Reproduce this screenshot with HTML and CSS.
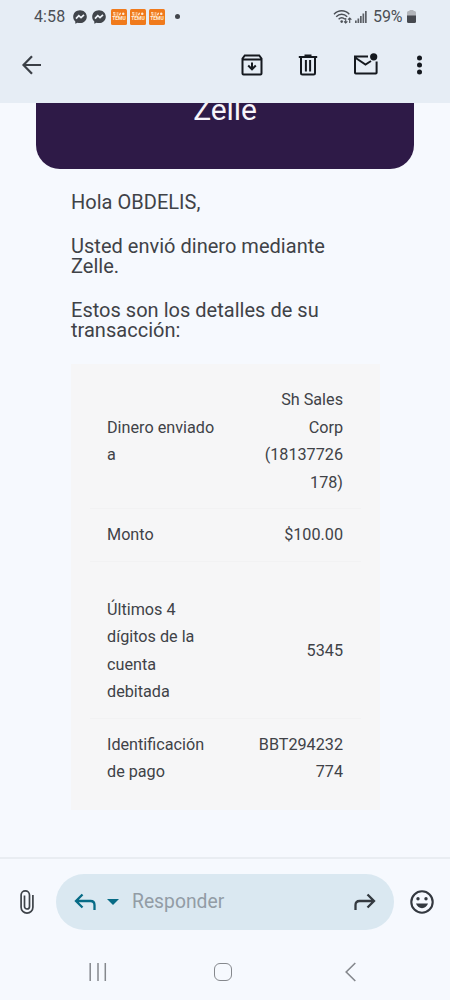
FILE: index.html
```html
<!DOCTYPE html>
<html lang="es">
<head>
<meta charset="utf-8">
<title>Correo</title>
<link rel="stylesheet" href="styles.css">
</head>
<body>
<div class="screen">
  <header class="top">
    <div class="status">
      <span class="clock">4:58</span>
      <svg class="chat" viewBox="0 0 14 14"><path d="M7 .2C3.100 .2.200 3 .200 6.700c0 2 .8 3.600 2.100 4.800v2.300l2.200-1.100c.8.200 1.600.4 2.500.4 3.900 0 6.800-2.800 6.800-6.400S10.900.2 7 .2z" fill="#41454b"/><path d="M3 8.700l2.800-3 2.200 1.900L11 4.900" fill="none" stroke="#eef3f9" stroke-width="1.700"/></svg>
      <svg class="chat" viewBox="0 0 14 14"><path d="M7 .2C3.100 .2.200 3 .200 6.700c0 2 .8 3.600 2.100 4.800v2.300l2.200-1.100c.8.200 1.600.4 2.500.4 3.900 0 6.800-2.800 6.800-6.400S10.900.2 7 .2z" fill="#41454b"/><path d="M3 8.700l2.800-3 2.200 1.900L11 4.900" fill="none" stroke="#eef3f9" stroke-width="1.700"/></svg>
      <div class="temu"><svg viewBox="0 0 12 4"><path d="M0 .8h2.400M.5 2.800h2M3.500 1h2M3.500 3h2M6.500 3.200L7.500.8M9 1.800h2.500M10.200.5v2.500"/></svg><span>TEMU</span></div>
      <div class="temu"><svg viewBox="0 0 12 4"><path d="M0 .8h2.400M.5 2.800h2M3.500 1h2M3.500 3h2M6.500 3.200L7.500.8M9 1.800h2.500M10.200.5v2.500"/></svg><span>TEMU</span></div>
      <div class="temu"><svg viewBox="0 0 12 4"><path d="M0 .8h2.400M.5 2.800h2M3.500 1h2M3.500 3h2M6.500 3.200L7.500.8M9 1.800h2.500M10.200.5v2.500"/></svg><span>TEMU</span></div>
      <i class="dot"></i>
      <svg class="wifi" viewBox="0 0 20 16"><g fill="none" stroke="#4b4f55" stroke-width="1.400"><path d="M1 5.200C5.500.5 12 .5 16.300 5.200M3.200 7.700c3.200-3.300 7.800-3.300 11 0M5.600 10.200c1.900-1.900 4.400-1.900 6.300 0"/><path d="M12.700 9v5M11 12.300l1.700 1.700 1.700-1.700M16.700 14V9M15 10.700L16.700 9l1.700 1.700" stroke-width="1.100"/></g><circle cx="8.700" cy="12.600" r="1.300" fill="#4b4f55"/></svg>
      <svg class="signal" viewBox="0 0 12 12"><path d="M0 9.500h1.700V12H0zM2.500 7.500h1.700V12H2.500zM5 5h1.700v7H5zM7.500 2.500h1.700V12H7.500zM10 0h1.700v12H10z" fill="#5b5f65"/></svg>
      <span class="percent">59%</span>
      <svg class="battery" viewBox="0 0 9 13"><path d="M2.500 0h4v1h1q1.500 0 1.500 1.500V6H0V2.500Q0 1 1.500 1h1z" fill="#b2b5ba"/><path d="M0 5.500h9v6Q9 13 7.500 13h-6Q0 13 0 11.500z" fill="#46494f"/></svg>
    </div>
    <div class="actions">
      <svg class="back" viewBox="0 0 20 20" fill="none" stroke="#3b4047" stroke-width="2.200"><path d="M19 10H1.800M10 1.200L1.500 10l8.500 8.800"/></svg>
      <svg class="archive" viewBox="0 0 22 22" fill="none" stroke="#15191f" stroke-width="2"><path d="M1.500 4.500L3.800 1.500h14.400L20.500 4.500v15q0 1-1 1h-17q-1 0-1-1zM1.500 5.500h19M11 8.500v6.500M7.200 11.500l3.800 3.800 3.800-3.800"/></svg>
      <svg class="trash" viewBox="0 0 20 22" fill="none" stroke="#15191f" stroke-width="2"><path d="M.8 2.900h18.400M6.500 1.500h7M3 2.900v16.100q0 1.500 1.500 1.500h11q1.500 0 1.500-1.500V2.900M7.900 6v11.500M12.100 6v11.500"/></svg>
      <svg class="mail" viewBox="0 0 25 22" fill="none" stroke="#15191f" stroke-width="2"><path d="M15 3.500H2v16.200q0 .8.8.8h20q.8 0 .8-.8V8.500M2 4.500L12.500 11.500 18 8"/><circle cx="20.700" cy="3.800" r="3.600" fill="#15191f" stroke="none"/></svg>
      <svg class="more" viewBox="0 0 5 20" fill="#15191f"><circle cx="2.500" cy="3" r="2.500"/><circle cx="2.500" cy="10" r="2.500"/><circle cx="2.500" cy="17" r="2.500"/></svg>
    </div>
  </header>
  <main class="message">
    <div class="banner"><span>Zelle</span></div>
    <div class="copy">
      <p>Hola OBDELIS,</p>
      <p>Usted envió dinero mediante<br>Zelle.</p>
      <p>Estos son los detalles de su<br>transacción:</p>
      <div class="details">
        <div class="row"><span>Dinero enviado<br>a</span><span class="value">Sh Sales<br>Corp<br>(18137726<br>178)</span></div>
        <div class="row"><span>Monto</span><span class="value">$100.00</span></div>
        <div class="row account"><span>Últimos 4<br>dígitos de la<br>cuenta<br>debitada</span><span class="value">5345</span></div>
        <div class="row"><span>Identificación<br>de pago</span><span class="value">BBT294232<br>774</span></div>
      </div>
    </div>
  </main>
  <footer class="bottom">
    <div class="composer">
      <svg class="clip" viewBox="0 0 14 24" fill="none" stroke="#3e4349" stroke-width="1.700"><path d="M12.900 5v12.200a5.900 5.900 0 0 1-11.800 0V5a4.200 4.200 0 0 1 8.400 0v11.500a2.500 2.500 0 0 1-5 0V5.500"/></svg>
      <div class="reply">
        <svg class="reply-arrow" viewBox="0 0 22 18" fill="none" stroke="#076b86" stroke-width="2.300"><path d="M8.500 1.500L2 8l6.500 6.500M2 8h14.500q4 0 4 4v5"/></svg>
        <i class="caret"></i>
        <span class="hint">Responder</span>
        <svg class="forward" viewBox="0 0 22 18" fill="none" stroke="#343a40" stroke-width="2.300"><path d="M13.500 1.500L20 8l-6.500 6.500M20 8H5.500q-4 0-4 4v5"/></svg>
      </div>
      <svg class="smile" viewBox="0 0 24 24"><circle cx="12" cy="12" r="10.700" fill="none" stroke="#343940" stroke-width="2.100"/><circle cx="8" cy="8.800" r="1.700" fill="#343940"/><circle cx="16" cy="8.800" r="1.700" fill="#343940"/><path d="M6 13.600h12c-.8 2.700-3.100 4.600-6 4.600s-5.200-1.900-6-4.600z" fill="#343940"/></svg>
    </div>
    <nav class="nav">
      <svg class="recents" viewBox="0 0 18 18"><path d="M1.200 0v18M9 0v18M16.300 0v18" stroke="#85888d" stroke-width="1.500"/></svg>
      <i class="home"></i>
      <svg class="nav-back" viewBox="0 0 11 20"><path d="M10.300 1L1.200 10l9.100 9" fill="none" stroke="#85888d" stroke-width="1.600"/></svg>
    </nav>
  </footer>
</div>
</body>
</html>
```
FILE: styles.css
```css
* { box-sizing: border-box; }
body { margin: 0; font-family: Roboto, "Liberation Sans", sans-serif; color: #404247; }
svg { display: block; flex: none; overflow: visible; }
.screen { width: 450px; height: 1000px; display: flex; flex-direction: column; background: #f6f9fe; overflow: hidden; }
.top { height: 103px; flex: none; background: #e6edf5; }
.status { height: 33px; display: flex; align-items: center; padding-left: 34px; }
.clock, .percent { font-size: 16px; line-height: 20px; color: #4b4f55; }
.clock { width: 38px; letter-spacing: .1px; }
.chat { width: 14px; height: 14px; margin: 0 5px 0 1px; }
.chat + .chat { margin-left: 0; }
.temu { width: 16px; height: 16px; margin: 0 3px 0 0; border-radius: 1.500px; background: #f07a1b; color: #fff0dd; display: flex; flex-direction: column; align-items: center; justify-content: center; }
.temu svg { width: 12px; height: 4px; stroke: #fff0dd; fill: none; stroke-width: 1.200; }
.temu span { font-size: 5px; line-height: 5px; font-weight: 700; }
.dot { width: 5px; height: 5px; border-radius: 50%; background: #41454b; margin-left: 7px; }
.wifi { width: 20px; height: 16px; margin-left: 153px; }
.signal { width: 12px; height: 12px; margin-left: 2px; }
.percent { width: 31px; margin-left: 6px; letter-spacing: -.1px; }
.battery { width: 9px; height: 13px; margin-left: 3px; }
.actions { height: 63px; display: flex; align-items: center; padding-left: 22px; }
.back { width: 20px; height: 20px; }
.archive { width: 22px; height: 22px; margin-left: 199px; }
.trash { width: 20px; height: 22px; margin-left: 35px; }
.mail { width: 25px; height: 22px; margin: -2px 0 0 35px; }
.more { width: 5px; height: 20px; margin-left: 39px; }
.message { flex: 1; min-height: 0; padding: 0 36px; }
.banner { height: 66px; border-radius: 0 0 24px 24px; background: #2e1a47; color: #f7f4fa; overflow: hidden; text-align: center; font-size: 30px; line-height: 34px; }
.banner span { display: block; margin-top: -10px; letter-spacing: -.1px; }
.copy { padding: 23px 35px 0; }
.copy p { margin: 0 0 24px; font-size: 20px; line-height: 20px; letter-spacing: .02px; white-space: nowrap; }
.details { width: 309px; height: 446px; padding: 10px 19px; background: #f6f6f7; font-size: 16.200px; line-height: 27.500px; }
.row { display: flex; justify-content: space-between; align-items: center; padding: 12px 18px 12px 17px; border-bottom: 1px solid #f2f2f3; }
.row:last-child { border-bottom: 0; }
.account { padding-top: 34px; }
.value { text-align: right; }
.bottom { height: 143px; flex: none; border-top: 2px solid #e9edf2; }
.composer { height: 85px; display: flex; align-items: center; padding-left: 20px; }
.clip { width: 14px; height: 24px; }
.reply { width: 338px; height: 56px; margin-left: 22px; padding: 0 18px; border-radius: 28px; background: #dae8f1; display: flex; align-items: center; }
.reply-arrow, .forward { width: 22px; height: 18px; }
.caret { border: 6px solid transparent; border-top-color: #076b86; border-bottom: 0; margin-left: 11px; }
.hint { font-size: 19.300px; line-height: 24px; color: #929ca5; margin-left: 13px; }
.forward { margin-left: auto; }
.smile { width: 24px; height: 24px; margin-left: 16px; }
.nav { height: 55px; display: flex; align-items: center; padding-left: 89px; }
.recents { width: 18px; height: 18px; }
.home { width: 18px; height: 18px; border: 1.500px solid #85888d; border-radius: 6px; margin-left: 107px; }
.nav-back { width: 11px; height: 20px; margin-left: 113px; }
```
